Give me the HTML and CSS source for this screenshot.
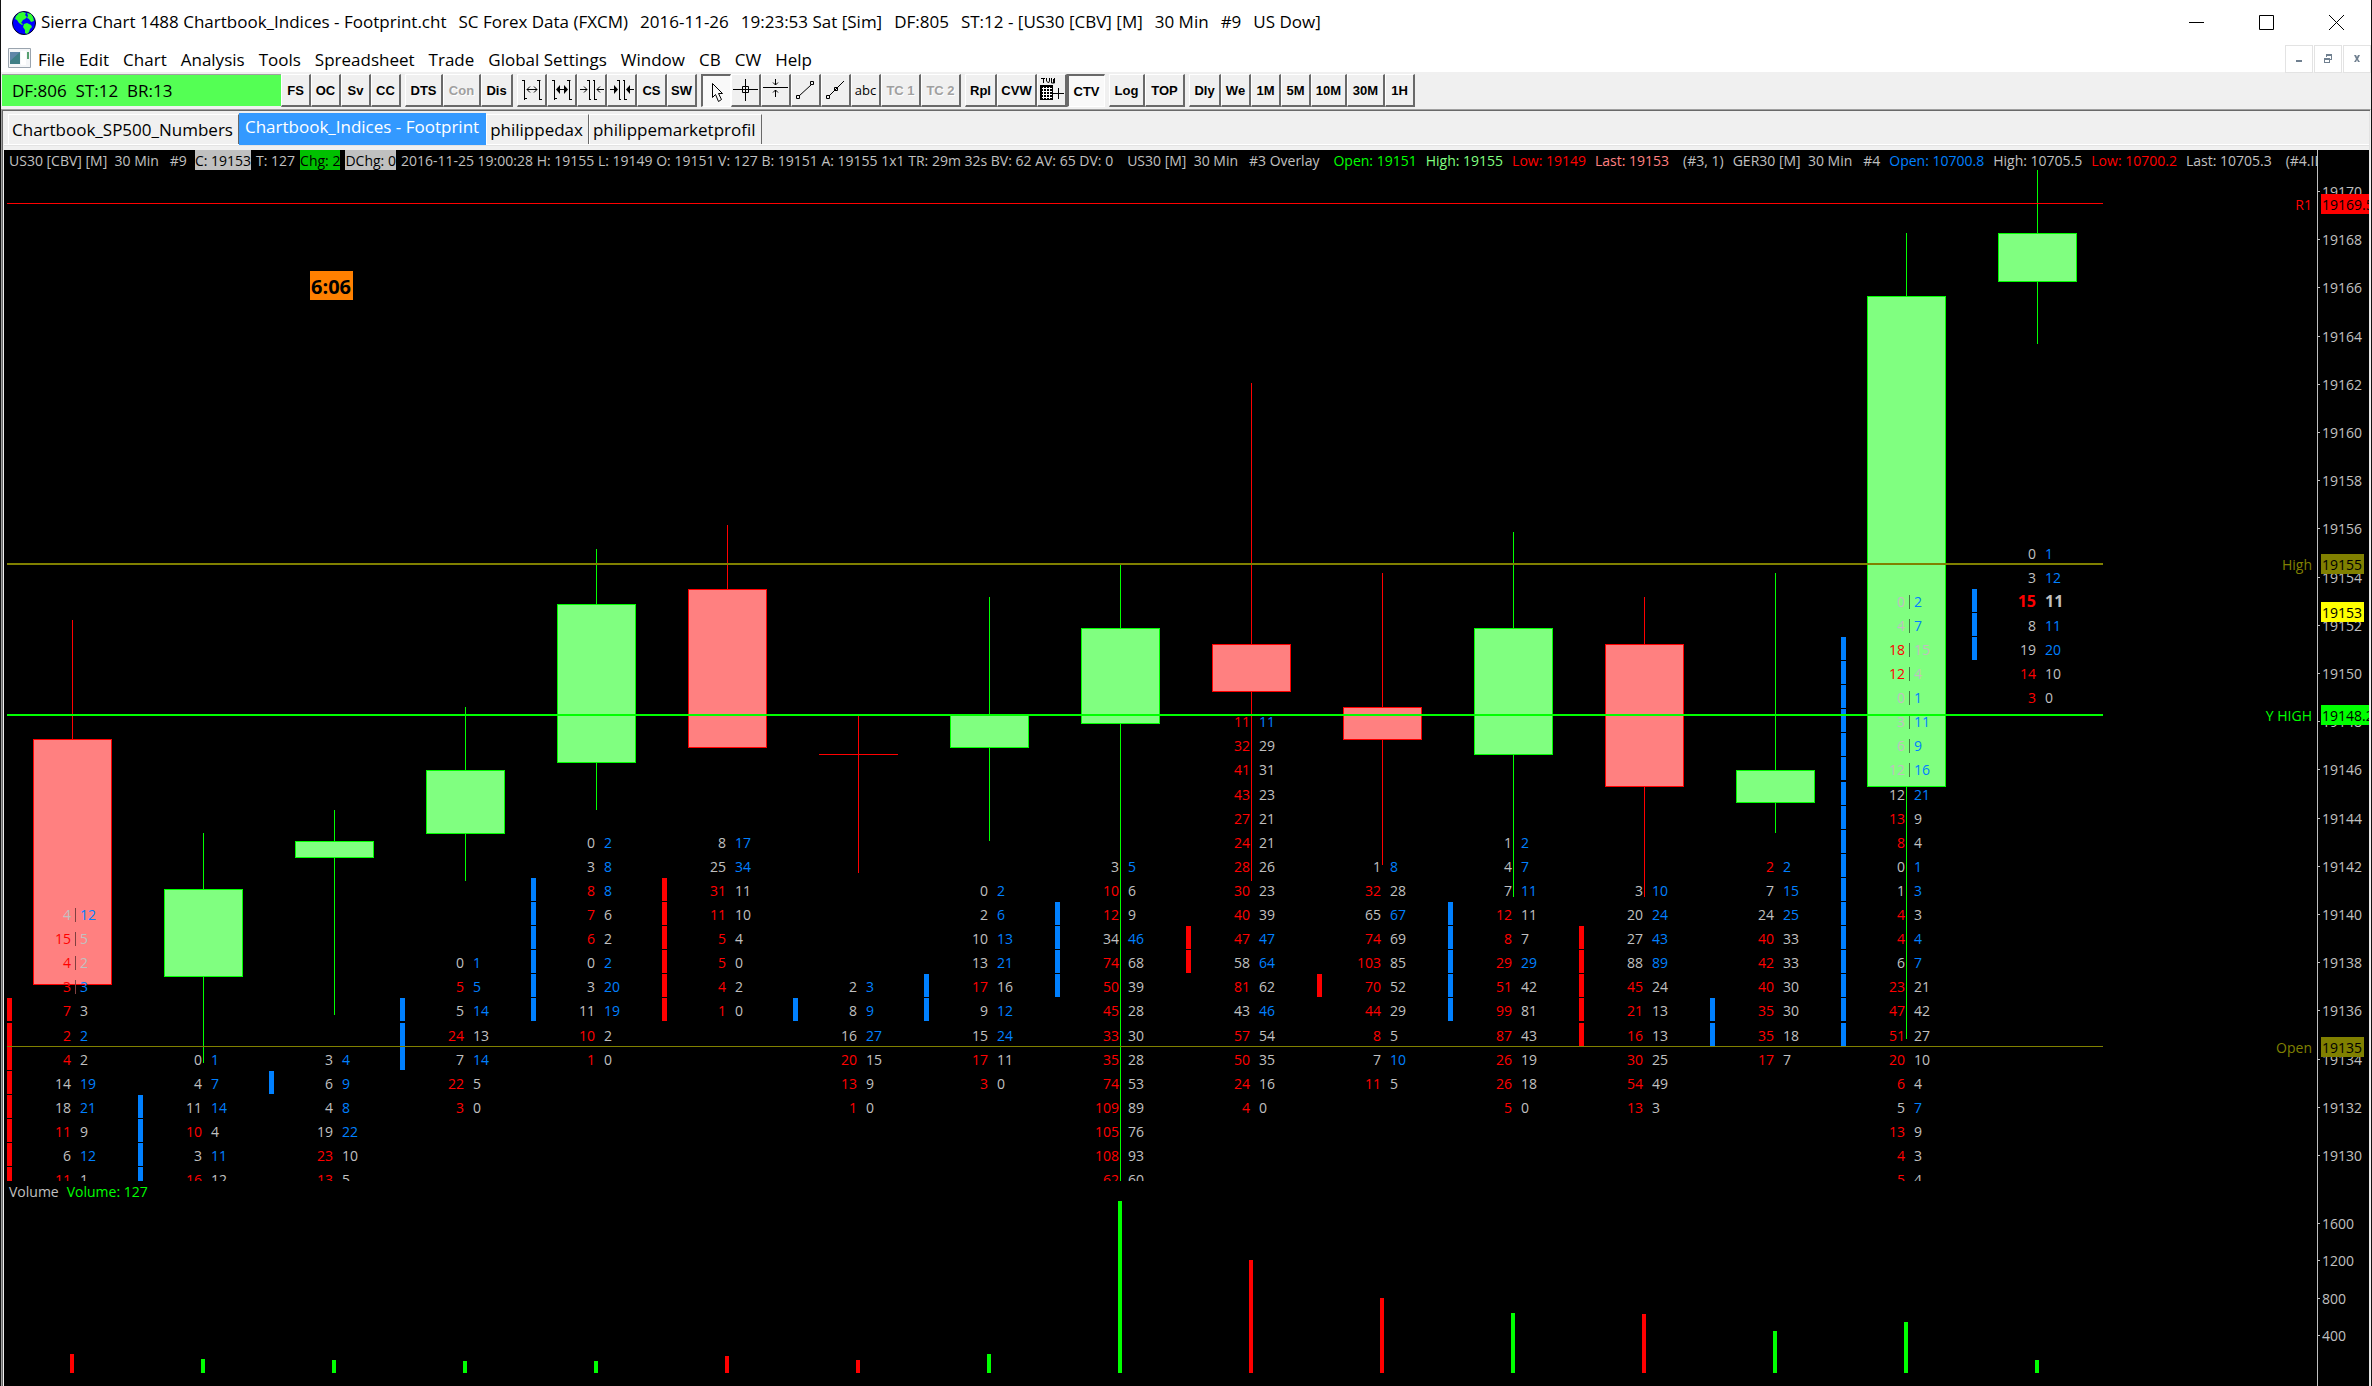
FILE: index.html
```
<!DOCTYPE html>
<html lang="en">
<head>
<meta charset="utf-8">
<title>Sierra Chart 1488 Chartbook_Indices - Footprint.cht</title>
<link rel="stylesheet" href="styles.css">
</head>
<body>
<header class="titlebar">
  <svg class="globe" width="24" height="24" viewBox="0 0 24 24" aria-hidden="true">
    <circle cx="12" cy="12" r="11.5" fill="#0000ff" stroke="#000020"/>
    <path fill="#30ff30" d="M4 5l3-3 4-1 3 1-1 2 2 2-2 2-2 1-2 3 2 1-1 1-3-2-2-3-2-1zM15 2l4 1 2 3 1 4-3 1-2-3-2-1 1-2zM12 13l3-1 4 2 1 2-2 2-1 3-2 2-2-1v-3l-2-3z"/>
  </svg>
  <h1 class="window-title"><span>Sierra Chart 1488 Chartbook_Indices - Footprint.cht</span> <span>SC Forex Data (FXCM)</span> <span>2016-11-26</span> <span>19:23:53 Sat [Sim]</span> <span>DF:805</span> <span>ST:12 - [US30 [CBV] [M]</span> <span>30 Min</span> <span>#9</span> <span>US Dow]</span></h1>
  <button class="caption" aria-label="Minimize"><svg width="15" height="15"><path d="M0 7.500H15"/></svg></button>
  <button class="caption" aria-label="Maximize"><svg width="15" height="15"><path d="M.5 .5H14.500V14.500H.5Z"/></svg></button>
  <button class="caption" aria-label="Close"><svg width="15" height="15"><path d="M0 0L15 15M15 0L0 15"/></svg></button>
</header>

<nav class="menubar" aria-label="Main menu">
  <svg class="doc-icon" width="23" height="20" viewBox="0 0 23 20" aria-hidden="true">
    <path d="M.5 .5H22.500V19.500H.5Z" fill="#f4f6f8" stroke="#9aa4ae"/>
    <path d="M2 4H12V16H2Z" fill="#3f7f86"/><path d="M2 4H12L2 13Z" fill="#5f86a8"/>
    <path d="M19 4H21V11H19Z" fill="#58a070"/><path d="M13 3H18V17H13Z" fill="#fff"/>
  </svg>
  <button>File</button><button>Edit</button><button>Chart</button><button>Analysis</button><button>Tools</button><button>Spreadsheet</button><button>Trade</button><button>Global Settings</button><button>Window</button><button>CB</button><button>CW</button><button>Help</button>
  <span class="mdi">
    <button aria-label="Minimize chart"><svg width="10" height="10"><path d="M2 6H8V8H2Z"/></svg></button>
    <button aria-label="Restore chart"><svg width="10" height="10"><path fill-rule="evenodd" d="M3 0H9V6H7V5H8V2H4V3H3ZM1 4H7V9H1ZM2 6V8H6V6Z"/></svg></button>
    <button aria-label="Close chart"><svg width="10" height="10"><path d="M2 1H4L5 3 6 1H8L6 5 8 8H6L5 6 4 8H2L4 5Z"/></svg></button>
  </span>
</nav>

<div class="toolbar" role="toolbar" aria-label="Chart tools">
  <output class="feed-status">DF:806  ST:12  BR:13</output>
  <div class="group"><button>FS</button><button>OC</button><button>Sv</button><button>CC</button></div>
  <div class="group"><button class="w38">DTS</button><button class="w38" disabled>Con</button><button class="w32">Dis</button></div>
  <div class="group">
    <button aria-label="Increase bar spacing"><svg width="30" height="30"><path d="M5 5.500H8M7.500 5V25M7.500 23.500H10M20 5.500H23.500M22.500 5V25M22.500 24.500H25M10 14.500H20M13 11.500L10 14.500 13 17.500M17 11.500L20 14.500 17 17.500"/></svg></button>
    <button aria-label="Increase spacing more"><svg width="30" height="30"><path d="M5 5.500H8M7.500 5V25M7.500 23.500H10M20 5.500H23.500M22.500 5V25M22.500 24.500H25M10 14.500H20"/><path class="fill" d="M9 14.500L13 10V19ZM21 14.500L17 10V19Z"/></svg></button>
    <button aria-label="Decrease bar spacing"><svg width="30" height="30"><path d="M10 5.500H13M12.500 5V25M12.500 24.500H14M16 5.500H18M17.500 5V25M17.500 24.500H20M3 14.500H10M7 11.500L10 14.500 7 17.500M20 14.500H27M23 11.500L20 14.500 23 17.500"/></svg></button>
    <button aria-label="Decrease spacing more"><svg width="30" height="30"><path d="M10 5.500H13M12.500 5V25M12.500 24.500H14M16 5.500H18M17.500 5V25M17.500 24.500H20M3 14.500H10M20 14.500H27"/><path class="fill" d="M11 14.500L7 10V19ZM19 14.500L23 10V19Z"/></svg></button>
    <button>CS</button><button>SW</button>
  </div>
  <div class="group">
    <button class="pressed" aria-label="Pointer" aria-pressed="true"><svg width="30" height="30"><path fill="#fff" d="M10.500 7.500V21.500L13.500 18.500 16.500 25.500 19.500 23.500 16.500 17.500H20.500Z"/></svg></button>
    <button aria-label="Chart values"><svg width="30" height="30"><path d="M2 14.500H27M14.500 4V26M11.500 11.500H17.500V17.500H11.500Z"/></svg></button>
    <button aria-label="Hairline"><svg width="30" height="30"><path d="M2 12.500H27M14.500 4V10M12 7.500L14.500 10 17 7.500M14.500 15V22M12 17.500L14.500 15 17 17.500"/></svg></button>
    <button aria-label="Line"><svg width="30" height="30"><path d="M8 21L20 10M5.500 20.500H8.500V23.500H5.500ZM19.500 6.500H22.500V9.500H19.500Z"/></svg></button>
    <button aria-label="Ray"><svg width="30" height="30"><path d="M8 21L23 6M5.500 20.500H8.500V23.500H5.500ZM13.500 12.500H16.500V15.500H13.500Z"/></svg></button>
    <button class="plain">abc</button><button class="w40" disabled>TC 1</button><button class="w40" disabled>TC 2</button>
  </div>
  <div class="group">
    <button class="w32">Rpl</button><button class="w40">CVW</button>
    <button aria-label="Trade volume window"><svg width="30" height="30"><path d="M4 3.500H8M6.500 3V8M9.500 3V6L11.500 8 12.500 6V3M14.500 3V8H16L17.500 8V3M16.500 4V8M15 18.500H27M21.500 13V24"/><path class="fill" d="M3 10H16V25H3Z"/><path class="grid" d="M5 13.500H15M5 16.500H15M5 19.500H15M5 22.500H15M6.500 12V24M9.500 12V24M12.500 12V24"/></svg></button>
    <button class="w38 pressed" aria-pressed="true">CTV</button>
  </div>
  <div class="group"><button class="w36">Log</button><button class="w40">TOP</button></div>
  <div class="group"><button class="w32">Dly</button><button>We</button><button>1M</button><button>5M</button><button class="w36">10M</button><button class="w38">30M</button><button>1H</button></div>
</div>

<main class="workspace">
  <div class="tabs" role="tablist">
    <button role="tab">Chartbook_SP500_Numbers</button><button role="tab" class="active" aria-selected="true">Chartbook_Indices - Footprint</button><button role="tab">philippedax</button><button role="tab">philippemarketprofil</button>
  </div>
  <section class="chart" aria-label="US30 30 minute footprint chart">
    <div class="plots">
      <p class="readout">
        <span class="symbol">US30 [CBV] [M]  30 Min   #9</span><span class="chip">C: 19153</span><span>T: 127</span><span class="chip up">Chg: 2</span><span class="chip">DChg: 0</span><span>2016-11-25 19:00:28 H: 19155 L: 19149 O: 19151 V: 127 B: 19151 A: 19155 1x1 TR: 29m 32s BV: 62 AV: 65 DV: 0</span><span class="lead">US30 [M]  30 Min   #3 Overlay</span><span class="lead lime">Open: 19151</span><span class="study mint">High: 19155</span><span class="study red">Low: 19149</span><span class="study rose">Last: 19153</span><span class="lead">(#3, 1)</span><span class="study">GER30 [M]  30 Min   #4</span><span class="study blue">Open: 10700.8</span><span class="study">High: 10705.5</span><span class="study red">Low: 10700.2</span><span class="study">Last: 10705.3</span><span class="lead">(#4.ID</span>
      </p>
      <svg class="price-plot" id="price" height="1011"></svg>
      <p class="volume-readout"><span>Volume</span><span class="lime">Volume: 127</span></p>
      <svg class="volume-plot" id="volume" height="180"></svg>
    </div>
    <svg class="axis" id="axis" width="52"></svg>
  </section>
</main>
<script src="chart.js"></script>
</body>
</html>
```
FILE: styles.css
```
* { box-sizing: border-box; }
body {
  margin: 0;
  min-height: 100vh;
  display: flex;
  flex-direction: column;
  background: #f0f0f0;
  border-left: 1px solid #111;
  border-right: 1px solid #111;
  font: 17px/24px "Open Sans", "Noto Sans", sans-serif;
  color: #000;
  overflow: hidden;
}
button { font: inherit; color: inherit; background: none; border: 0; padding: 0; margin: 0; }
p, h1 { margin: 0; }
svg { display: block; }

.titlebar { display: flex; align-items: center; height: 45px; background: #fff; padding-left: 11px; }
.globe { margin-right: 5px; }
.window-title { flex: 1; display: flex; gap: 12px; padding-bottom: 1px; font-size: 17px; font-weight: 400; white-space: pre; overflow: hidden; }
.caption { width: 70px; height: 43px; display: grid; place-items: center; }
.caption path { fill: none; stroke: #000; }

.menubar { display: flex; align-items: center; gap: 14px; height: 27px; background: #fff; padding: 2px 0 0 7px; }
.doc-icon { margin: -3px -7px 0 0; }
.mdi { display: flex; gap: 1px; margin-left: auto; align-self: flex-start; margin-top: -2px; }
.mdi button { width: 28px; height: 28px; border: 1px solid #e3e3e3; display: grid; place-items: center; }
.mdi path { fill: #708090; }

.toolbar { display: flex; gap: 4px; height: 37px; padding: 2px 0 3px 1px; }
.feed-status { width: 279px; margin-right: -4px; background: #54ff54; border-top: 1px solid #a0a0a0; padding: 4px 0 0 10px; height: 32px; white-space: pre; }
.group { display: flex; }
.toolbar button {
  width: 30px;
  height: 33px;
  border: 1px solid #fff;
  border-right: 2px solid #696969;
  border-bottom: 2px solid #696969;
  font: bold 13px/29px "Liberation Sans", Arial, sans-serif;
}
.toolbar button:disabled { color: #a0a0a0; text-shadow: 1px 1px #fff; }
.toolbar .plain { font-family: "Open Sans", sans-serif; font-weight: 400; }
.toolbar .pressed { background: #f9f9f9; border: 2px solid #696969; border-right: 1px solid #fff; border-bottom: 1px solid #fff; }
.toolbar .w32 { width: 32px; }
.toolbar .w36 { width: 36px; }
.toolbar .w38 { width: 38px; }
.toolbar .w40 { width: 40px; }
.toolbar svg { margin-left: -1px; overflow: visible; }
.toolbar path { fill: none; stroke: #000; }
.toolbar .fill { fill: #000; stroke: none; }
.toolbar .grid { stroke: #fff; }

.workspace {
  flex: 1;
  display: flex;
  flex-direction: column;
  border-top: 1px solid #a0a0a0;
  border-left: 1px solid #a0a0a0;
  border-right: 1px solid #f0f0f0;
  box-shadow: inset 1px 1px #696969, inset -1px 0 #e3e3e3;
  padding: 1px 1px 0 2px;
}
.tabs { display: flex; align-items: flex-start; height: 34px; padding: 2px 0 0 4px; border-bottom: 1px solid #fff; box-shadow: 0 1px #e3e3e3; margin-bottom: 5px; }
.tabs button {
  height: 30px;
  margin-top: 1px;
  padding: 0 5px 0 3px;
  border: 1px solid #fff;
  border-width: 1px 1px 0 1px;
  border-right-color: #696969;
  white-space: pre;
}
.tabs .active { height: 32px; margin-top: 0; padding: 0 7px 4px 6px; border: 0; background: #3399ff; color: #fff; }

.chart { flex: 1; display: flex; background: #000; color: #c0c0c0; font-size: 14px; line-height: 20px; }
.plots { flex: 1; min-width: 0; display: flex; flex-direction: column; }
.readout { display: flex; gap: 5px; height: 20px; padding-left: 5px; white-space: pre; overflow: hidden; line-height: 21px; }
.readout span { flex: none; }
.readout .symbol { margin-right: 3px; }
.chip { background: #c0c0c0; color: #000; }
.chip.up { background: #00c000; }
.readout .study { margin-left: 4px; }
.readout .lead { margin-left: 9px; }
.volume-readout { display: flex; gap: 8px; padding-left: 5px; height: 25px; line-height: 22px; }
.lime { color: #00ff00; }
.mint { color: #80ff80; }
.red { color: #ff0000; }
.rose { color: #ff8080; }
.blue { color: #0080ff; }

.price-plot, .volume-plot { width: 100%; }
.volume-plot { overflow: visible; }
.axis { height: auto; align-self: stretch; }
.chart svg { font-size: 14px; fill: #c0c0c0; shape-rendering: crispEdges; }
.chart .bold { font-weight: 700; font-size: 16px; }
.chart .timer { font-weight: 700; font-size: 20px; }
```
FILE: chart.js
```
const LIME = '#00ff00', RED = '#ff0000', BLUE = '#0080ff', GREY = '#c0c0c0', OLIVE = '#808000';
const FIRST_BAR = 68, BAR_STEP = 131;
const TICK = 24.1;
const priceY = p => Math.round(21 + (19170 - p) * TICK);

// Bars: candle = [direction, wick top, body top, body bottom, wick bottom] in plot pixels;
// top = price of the first footprint row, rows = bid/ask pairs, va = value area [from, to, colour], vol = volume bar height.
const bars = [
  { candle: ['d', 450, 569, 815, 815], top: 19140, rows: '4/12 15/5 4/2 3/3 7/3 2/2 4/2 14/19 18/21 11/9 6/12 11/1', va: [19136, 19129, RED], vol: 19, volColor: RED },
  { candle: ['u', 663, 719, 807, 893], top: 19134, rows: '0/1 4/7 11/14 10/4 3/11 16/12', va: [19132, 19129, BLUE], vol: 14, volColor: LIME },
  { candle: ['u', 640, 671, 688, 845], top: 19134, rows: '3/4 6/9 4/8 19/22 23/10 13/5', va: [19133, 19133, BLUE], vol: 13, volColor: LIME },
  { candle: ['u', 537, 600, 664, 711], top: 19138, rows: '0/1 5/5 5/14 24/13 7/14 22/5 3/0', va: [19136, 19134, BLUE], vol: 12, volColor: LIME },
  { candle: ['u', 379, 434, 593, 640], top: 19143, rows: '0/2 3/8 8/8 7/6 6/2 0/2 3/20 11/19 10/2 1/0', va: [19141, 19136, BLUE], vol: 12, volColor: LIME },
  { candle: ['d', 355, 419, 578, 578], top: 19143, rows: '8/17 25/34 31/11 11/10 5/4 5/0 4/2 1/0', va: [19141, 19136, RED], vol: 17, volColor: RED },
  { candle: ['d', 545, 584, 585, 703], top: 19137, rows: '2/3 8/9 16/27 20/15 13/9 1/0', va: [19136, 19136, BLUE], vol: 13, volColor: RED },
  { candle: ['u', 427, 545, 578, 671], top: 19141, rows: '0/2 2/6 10/13 13/21 17/16 9/12 15/24 17/11 3/0', va: [19137, 19136, BLUE], vol: 19, volColor: LIME },
  { candle: ['u', 395, 458, 554, 1011], top: 19142, rows: '3/5 10/6 12/9 34/46 74/68 50/39 45/28 33/30 35/28 74/53 109/89 105/76 108/93 62/60', va: [19140, 19137, BLUE], vol: 172, volColor: LIME },
  { candle: ['d', 213, 474, 522, 711], top: 19148, rows: '11/11 32/29 41/31 43/23 27/21 24/21 28/26 30/23 40/39 47/47 58/64 81/62 43/46 57/54 50/35 24/16 4/0', va: [19139, 19138, RED], vol: 113, volColor: RED },
  { candle: ['d', 403, 537, 570, 695], top: 19142, rows: '1/8 32/28 65/67 74/69 103/85 70/52 44/29 8/5 7/10 11/5', va: [19137, 19137, RED], vol: 75, volColor: RED },
  { candle: ['u', 362, 458, 585, 727], top: 19143, rows: '1/2 4/7 7/11 12/11 8/7 29/29 51/42 99/81 87/43 26/19 26/18 5/0', va: [19140, 19136, BLUE], vol: 60, volColor: LIME },
  { candle: ['d', 427, 474, 617, 727], top: 19141, rows: '3/10 20/24 27/43 88/89 45/24 21/13 16/13 30/25 54/49 13/3', va: [19139, 19135, RED], vol: 59, volColor: RED },
  { candle: ['u', 403, 600, 633, 663], top: 19142, rows: '2/2 7/15 24/25 40/33 42/33 40/30 35/30 35/18 17/7', va: [19136, 19135, BLUE], vol: 42, volColor: LIME },
  { candle: ['u', 63, 126, 617, 869], top: 19153, rows: '0/2 4/7 18/15 12/4 0/1 3/11 6/9 12/16 12/21 13/9 8/4 0/1 1/3 4/3 4/4 6/7 23/21 47/42 51/27 20/10 6/4 5/7 13/9 4/3 5/4', va: [19151, 19135, BLUE], vol: 51, volColor: LIME },
  { candle: ['u', 0, 63, 112, 174], top: 19155, rows: '0/1 3/12 15/11 8/11 19/20 14/10 3/0', va: [19153, 19151, BLUE], vol: 13, volColor: LIME, boldPrice: 19153 }
];

const levels = [
  { y: 33, size: 1, color: RED, name: 'R1', value: '19169.5' },
  { y: 393, size: 2, color: OLIVE, name: 'High', value: '19155' },
  { y: 544, size: 2, color: LIME, name: 'Y HIGH', value: '19148.2' },
  { y: 876, size: 1, color: OLIVE, name: 'Open', value: '19135' }
];

const rect = (x, y, w, h, fill) => `<rect x="${x}" y="${y}" width="${w}" height="${h}" fill="${fill}"/>`;
const text = (x, y, str, fill, extra = '') => `<text x="${x}" y="${y}" fill="${fill}" ${extra}>${str}</text>`;

let price = '', volume = '';
bars.forEach((bar, i) => {
  const x = FIRST_BAR + i * BAR_STEP;
  const [dir, high, bodyTop, bodyEnd, low] = bar.candle;
  const edge = dir === 'u' ? LIME : RED;
  price += rect(x, high, 1, low - high, edge) + rect(x - 39, bodyTop, 79, bodyEnd - bodyTop, edge);
  if (bodyEnd - bodyTop > 2) price += rect(x - 38, bodyTop + 1, 77, bodyEnd - bodyTop - 2, dir === 'u' ? '#80ff80' : '#ff8080');
  for (let p = bar.va[0]; p >= bar.va[1]; p--) price += rect(x - 65, priceY(p) - 12, 5, 23, bar.va[2]);
  bar.rows.split(' ').forEach((row, n) => {
    const [bid, ask] = row.split('/').map(Number);
    const p = bar.top - n, mid = priceY(p), y = mid + 6;
    const cls = p === bar.boldPrice ? 'class="bold"' : '';
    if (mid > bodyTop && mid < bodyEnd + 3) price += rect(x + 3, mid - 6, 1, 14, dir === 'u' ? '#408040' : '#804040');
    price += text(x - 1, y, bid, bid >= ask ? RED : GREY, `text-anchor="end" ${cls}`);
    price += text(x + 8, y, ask, ask >= bid ? BLUE : GREY, cls);
  });
  volume += rect(x - 2, 167 - bar.vol, 4, bar.vol, bar.volColor);
});

let axis = rect(0, 0, 1, '100%', GREY);
for (let p = 19170; p >= 19130; p -= 2) {
  const y = priceY(p) + 20;
  axis += rect(1, y, 2, 1, GREY) + text(5, y + 6, p, GREY);
}
[1600, 1200, 800, 400].forEach(v => {
  const y = Math.round(1223 - v * 0.094);
  axis += rect(1, y, 2, 1, GREY) + text(5, y + 6, v, GREY);
});

const tag = (y, str, color) => rect(4, y - 10, str.length > 5 ? 48 : 43, 20, color) + text(5, y + 6, str, '#000');
levels.forEach(l => {
  price += rect(3, l.y, 2096, l.size, l.color);
  price += text('100%', l.y + 7, l.name, l.color, 'text-anchor="end" dx="-5"');
  axis += tag(l.y + 21, l.value, l.color);
});
axis += tag(462, '19153', '#ffff00');
price += rect(306, 101, 43, 29, '#ff8000') + text(307, 124, '6:06', '#000', 'class="timer"');

document.getElementById('price').innerHTML = price;
document.getElementById('volume').innerHTML = volume;
document.getElementById('axis').innerHTML = axis;
```
